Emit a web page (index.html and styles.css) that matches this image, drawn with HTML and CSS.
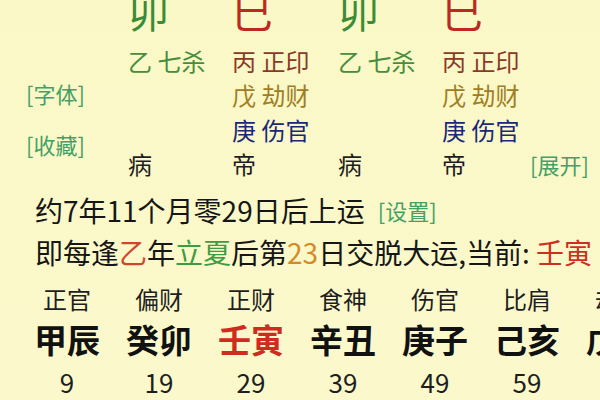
FILE: index.html
```html
<!DOCTYPE html>
<html lang="zh">
<head>
<meta charset="utf-8">
<link rel="stylesheet" href="styles.css">
</head>
<body>
<div class="page">
  <div class="pillars">
    <div class="cell"></div>
    <div class="cell big green">卯</div>
    <div class="cell big red">巳</div>
    <div class="cell big green">卯</div>
    <div class="cell big red">巳</div>
    <div class="cell"></div>

    <div class="cell"></div>
    <div class="cell hid green2">乙 七杀</div>
    <div class="cell hid brown">丙 正印</div>
    <div class="cell hid green2">乙 七杀</div>
    <div class="cell hid brown">丙 正印</div>
    <div class="cell"></div>

    <div class="cell link up">[字体]</div>
    <div class="cell"></div>
    <div class="cell hid olive">戊 劫财</div>
    <div class="cell"></div>
    <div class="cell hid olive">戊 劫财</div>
    <div class="cell"></div>

    <div class="cell link span2">[收藏]</div>
    <div class="cell"></div>
    <div class="cell hid navy">庚 伤官</div>
    <div class="cell"></div>
    <div class="cell hid navy">庚 伤官</div>
    <div class="cell"></div>

    <div class="cell stage">病</div>
    <div class="cell stage">帝</div>
    <div class="cell stage">病</div>
    <div class="cell stage">帝</div>
    <div class="cell link expand">[展开]</div>
  </div>

  <div class="line first">约7年11个月零29日后上运<span class="link small">[设置]</span></div>
  <div class="line">即每逢<span class="c-red">乙</span>年<span class="c-green">立夏</span>后第<span class="c-orange">23</span>日交脱大运,当前:&nbsp;<span class="c-cur">壬寅</span></div>

  <div class="dayun">
    <div class="col"><div class="god">正官</div><div class="gz">甲辰</div><div class="age">9</div></div>
    <div class="col"><div class="god">偏财</div><div class="gz">癸卯</div><div class="age">19</div></div>
    <div class="col"><div class="god">正财</div><div class="gz current">壬寅</div><div class="age">29</div></div>
    <div class="col"><div class="god">食神</div><div class="gz">辛丑</div><div class="age">39</div></div>
    <div class="col"><div class="god">伤官</div><div class="gz">庚子</div><div class="age">49</div></div>
    <div class="col"><div class="god">比肩</div><div class="gz">己亥</div><div class="age">59</div></div>
    <div class="col"><div class="god">劫财</div><div class="gz">戊戌</div><div class="age">69</div></div>
  </div>
</div>
</body>
</html>
```

FILE: styles.css
```css
html, body {
  margin: 0;
  padding: 0;
}
body {
  background: #fbf9cb;
  font-family: "Noto Sans CJK SC", "Noto Sans", sans-serif;
  color: #1c1c1c;
}
.page {
  width: 600px;
  height: 400px;
  overflow: hidden;
  background: linear-gradient(180deg, #faf8c6 0%, #fbf9cc 100%);
}
.pillars {
  display: grid;
  grid-template-columns: 128px 104px 106px 104px 88px 1fr;
  grid-template-rows: 53px 34px 35px 34px 34px;
  margin-top: -10px;
  white-space: nowrap;
}
.cell {
  display: flex;
  align-items: center;
}
.big {
  font-size: 41px;
  line-height: 40px;
  align-items: flex-start;
}
.hid {
  font-size: 24px;
}
.green { color: #3a8c37; }
.red { color: #bd2820; }
.green2 { color: #468e3c; }
.brown { color: #8a3827; }
.olive { color: #a07d24; }
.navy { color: #1a2878; }
.link {
  color: #44a066;
  font-size: 22px;
  padding-left: 26px;
}
.up {
  padding-bottom: 4px;
}
.span2 {
  grid-row: span 2;
  padding-bottom: 4px;
}
.stage {
  font-size: 24px;
  color: #1e1e1e;
}
.expand {
  padding-left: 0;
  padding-top: 2px;
}
.line {
  height: 42px;
  display: flex;
  align-items: center;
  font-size: 28px;
  padding-left: 35px;
  white-space: nowrap;
  color: #161616;
}
.line.first {
  margin-top: 9px;
}
.link.small {
  padding-left: 13px;
  font-size: 22px;
}
.c-red { color: #d4442c; }
.c-green { color: #3c9c42; }
.c-orange { color: #d58a26; }
.c-cur { color: #cf2f1e; }
.dayun {
  display: flex;
  margin-top: 7px;
  padding-left: 21px;
}
.col {
  flex: 0 0 92px;
  display: flex;
  flex-direction: column;
  align-items: center;
  white-space: nowrap;
}
.god {
  height: 36px;
  display: flex;
  align-items: center;
  font-size: 24px;
  color: #1e1e1e;
}
.gz {
  height: 46px;
  display: flex;
  align-items: center;
  font-size: 33px;
  font-weight: 700;
  color: #111;
}
.gz.current {
  color: #cd2c1f;
}
.age {
  height: 38px;
  display: flex;
  align-items: center;
  font-size: 26px;
  color: #1e1e1e;
}
```
